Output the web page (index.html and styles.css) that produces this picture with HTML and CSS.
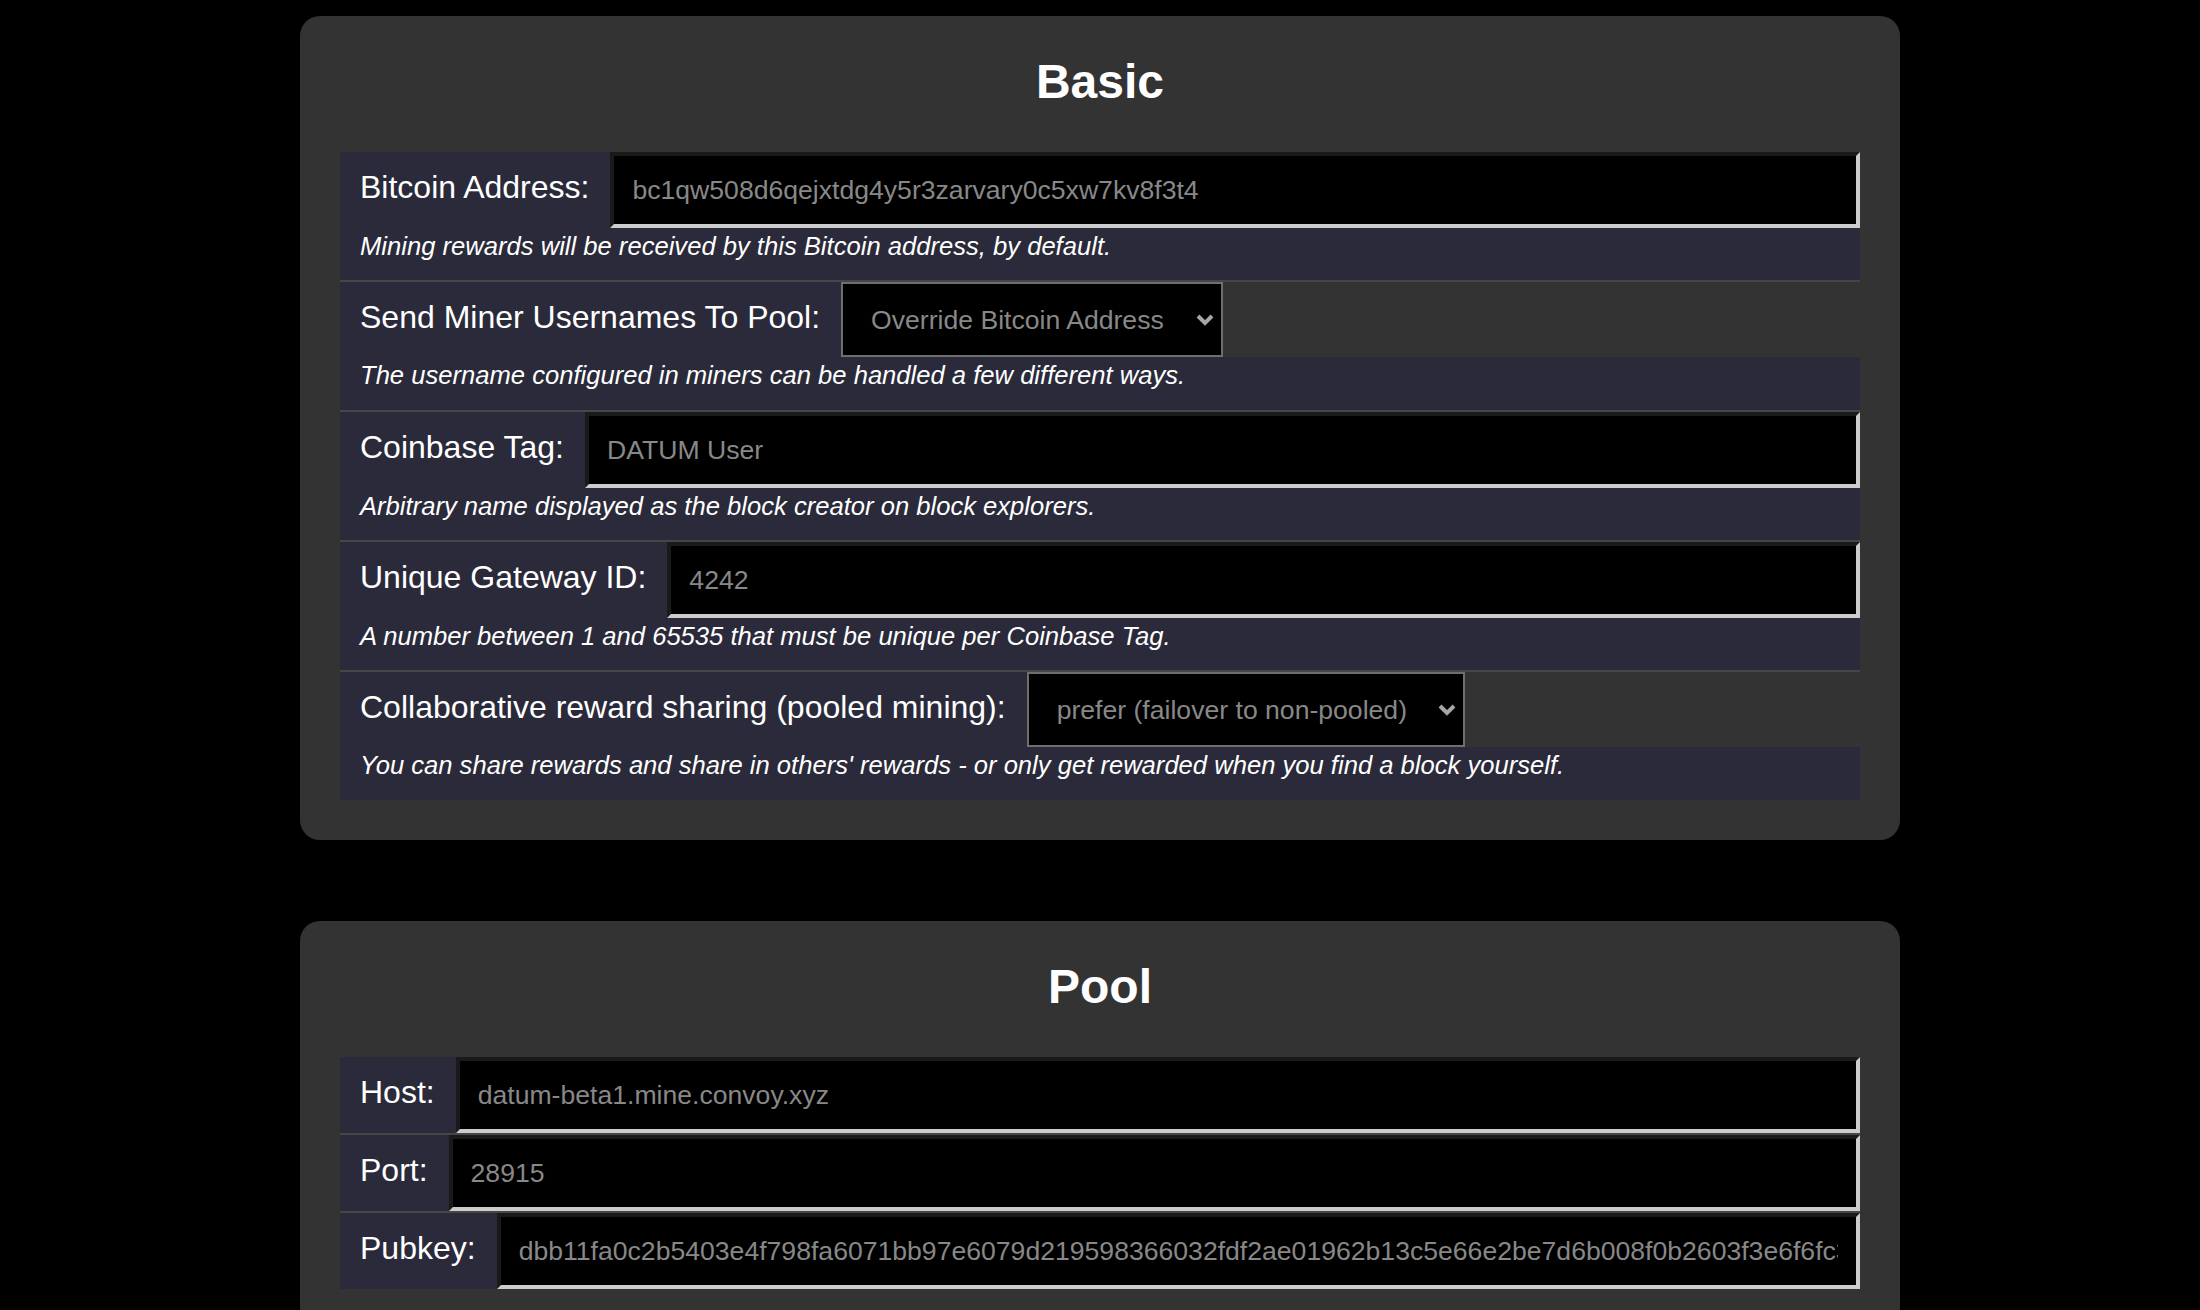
FILE: index.html
```html
<!DOCTYPE html>
<html>
<head>
  <title>DATUM Gateway Configuration</title>
  <link rel="stylesheet" href="styles.css">
</head>
<body>
  <div class="container">

    <div class="card">
      <h2>Basic</h2>
      <div class="fields">
        <div class="field">
          <div class="field-line">
            <label for="pool-address">Bitcoin Address:</label>
            <input type="text" id="pool-address" name="pool_address" value="bc1qw508d6qejxtdg4y5r3zarvary0c5xw7kv8f3t4">
          </div>
          <div class="field-desc">Mining rewards will be received by this Bitcoin address, by default.</div>
        </div>
        <div class="field">
          <div class="field-line">
            <label for="pool-pass-workers">Send Miner Usernames To Pool:</label>
            <span class="select-wrap">
              <select id="pool-pass-workers" name="pool_pass_workers">
                <option>Override Bitcoin Address</option>
                <option>Send as worker name</option>
                <option>Ignore</option>
              </select>
              <svg class="chevron" width="18" height="12" viewBox="0 0 18 12"><polyline points="2,2 9,9 16,2" fill="none" stroke="#a6a6a6" stroke-width="4"/></svg>
            </span>
          </div>
          <div class="field-desc">The username configured in miners can be handled a few different ways.</div>
        </div>
        <div class="field">
          <div class="field-line">
            <label for="coinbase-tag">Coinbase Tag:</label>
            <input type="text" id="coinbase-tag" name="coinbase_tag_secondary" value="DATUM User">
          </div>
          <div class="field-desc">Arbitrary name displayed as the block creator on block explorers.</div>
        </div>
        <div class="field">
          <div class="field-line">
            <label for="coinbase-unique-id">Unique Gateway ID:</label>
            <input type="text" id="coinbase-unique-id" name="coinbase_unique_id" value="4242">
          </div>
          <div class="field-desc">A number between 1 and 65535 that must be unique per Coinbase Tag.</div>
        </div>
        <div class="field">
          <div class="field-line">
            <label for="reward-sharing">Collaborative reward sharing (pooled mining):</label>
            <span class="select-wrap">
              <select id="reward-sharing" name="reward_sharing">
                <option>prefer (failover to non-pooled)</option>
                <option>always</option>
                <option>never</option>
              </select>
              <svg class="chevron" width="18" height="12" viewBox="0 0 18 12"><polyline points="2,2 9,9 16,2" fill="none" stroke="#a6a6a6" stroke-width="4"/></svg>
            </span>
          </div>
          <div class="field-desc">You can share rewards and share in others' rewards - or only get rewarded when you find a block yourself.</div>
        </div>
      </div>
    </div>

    <div class="card">
      <h2>Pool</h2>
      <div class="fields">
        <div class="field">
          <div class="field-line">
            <label for="pool-host">Host:</label>
            <input type="text" id="pool-host" name="pool_host" value="datum-beta1.mine.convoy.xyz">
          </div>
        </div>
        <div class="field">
          <div class="field-line">
            <label for="pool-port">Port:</label>
            <input type="text" id="pool-port" name="pool_port" value="28915">
          </div>
        </div>
        <div class="field">
          <div class="field-line">
            <label for="pool-pubkey">Pubkey:</label>
            <input type="text" id="pool-pubkey" name="pool_pubkey" value="dbb11fa0c2b5403e4f798fa6071bb97e6079d219598366032fdf2ae01962b13c5e66e2be7d6b008f0b2603f3e6f6fc3a7d0e4b">
          </div>
        </div>
      </div>
    </div>

  </div>
</body>
</html>
```

FILE: styles.css
```css
body {
  margin: 0;
  background-color: #000;
  color: #fff;
  font-family: "Liberation Sans", Arial, sans-serif;
}

.container {
  max-width: 1600px;
  margin: 16px auto 80px;
}

.card {
  background-color: #333;
  border-radius: 20px;
  padding: 38px 40px 40px;
  margin-bottom: 81px;
}

.card h2 {
  margin: 0 0 43px;
  font-size: 48px;
  text-align: center;
}

.field + .field {
  border-top: 2px solid #464646;
}

.field-line {
  display: flex;
  height: 76px;
}

.field-line label {
  display: flex;
  align-items: center;
  padding: 0 21px 5px 20px;
  background-color: #2a2a3a;
  font-size: 32px;
  white-space: nowrap;
}

.field-line input[type="text"] {
  flex: 1;
  min-width: 0;
  box-sizing: border-box;
  height: 76px;
  padding: 0 18px;
  border: 4px solid;
  border-color: #1a1a1a #ccc #ccc #1a1a1a;
  background-color: #000;
  color: #888;
  font-family: inherit;
  font-size: 26.6px;
  outline: none;
}

.select-wrap {
  position: relative;
  display: flex;
}

.select-wrap select {
  -webkit-appearance: none;
  appearance: none;
  box-sizing: border-box;
  height: 75px;
  padding: 0 55px 0 28px;
  border: 2px solid #6e6e6e;
  border-radius: 0;
  background-color: #000;
  color: #888;
  font-family: inherit;
  font-size: 26.6px;
}

.select-wrap .chevron {
  position: absolute;
  right: 9px;
  top: 32px;
  pointer-events: none;
}

.field-line:has(select) {
  height: 75px;
}

.field-desc {
  padding: 4px 20px 19px;
  line-height: 29px;
  background-color: #2a2a3a;
  font-size: 25.6px;
  font-style: italic;
}

.field-line:has(select) + .field-desc {
  padding-bottom: 20px;
}
```
